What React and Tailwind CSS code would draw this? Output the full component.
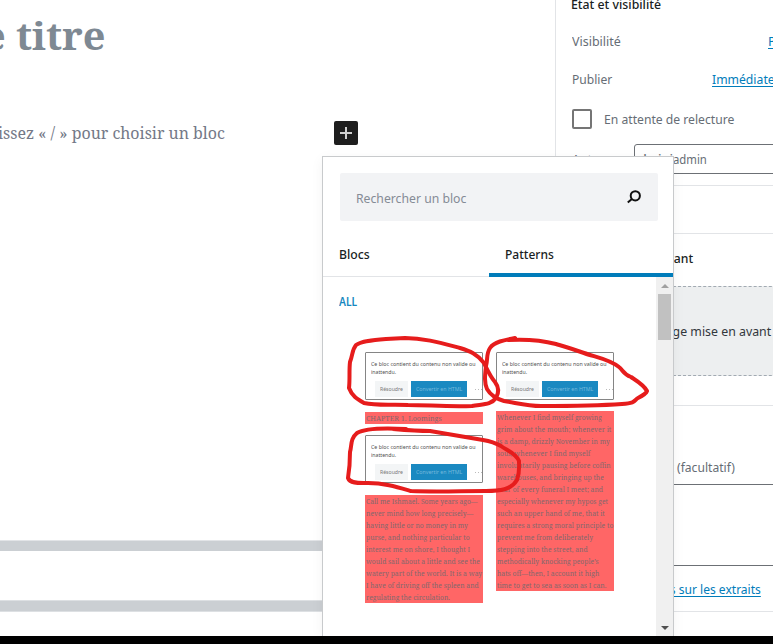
import { useLayoutEffect, useRef } from "react";

const SANS = "font-['Noto_Sans','Open_Sans',sans-serif]";
const SERIF = "font-['Noto_Serif','DejaVu_Serif',serif]";

// One line of text, condensed or widened to fill exactly `w` pixels.
function Fit({ w, className = "", children }) {
  const ref = useRef(null);
  useLayoutEffect(() => {
    const el = ref.current;
    const apply = () => {
      el.style.transform = `scaleX(${w / el.offsetWidth})`;
    };
    apply();
    document.fonts?.ready.then(apply);
  }, [w, children]);
  return (
    <span className="block shrink-0" style={{ width: w }}>
      <span ref={ref} className={`inline-block origin-left whitespace-nowrap align-top ${className}`}>
        {children}
      </span>
    </span>
  );
}

function InvalidBlock() {
  return (
    <div className="h-[48px] w-[118px] rounded-[1px] border border-[#858585] bg-white pl-[5px] pt-[7px]">
      <div className="text-[5.6px] leading-[8px] text-[#505050]">
        <Fit w={105}>Ce bloc contient du contenu non valide ou</Fit>
        <Fit w={25}>inattendu.</Fit>
      </div>
      <div className="mt-[5px] flex h-[16px] items-center pl-[4px] text-[5.6px] leading-[8px]">
        <div className="flex h-[16px] w-[33px] items-center justify-center bg-[#f3f5f6] text-[#777]">
          <Fit w={23}>Résoudre</Fit>
        </div>
        <div className="ml-[3px] flex h-[16px] w-[56px] items-center justify-center bg-[#1a89c1] text-[#76b9dc]">
          <Fit w={46}>Convertir en HTML</Fit>
        </div>
        <div className="ml-[8px] flex gap-[2px]">
          <i className="size-px bg-[#bbb]" />
          <i className="size-px bg-[#bbb]" />
          <i className="size-px bg-[#bbb]" />
        </div>
      </div>
    </div>
  );
}

function Excerpt({ lines, size = "text-[7.2px]" }) {
  return (
    <div className={`w-[118px] bg-[#ff6666] pl-[0.5px] text-[#85686d] ${SERIF} ${size}`}>
      {lines.map(([text, w]) => (
        <div key={text} className="h-[12px] leading-[12px]">
          <Fit w={w}>{text}</Fit>
        </div>
      ))}
    </div>
  );
}

const ISHMAEL = [
  ["Call me Ishmael. Some years ago—", 112],
  ["never mind how long precisely—", 107],
  ["having little or no money in my", 102],
  ["purse, and nothing particular to", 104],
  ["interest me on shore, I thought I", 104],
  ["would sail about a little and see the", 114],
  ["watery part of the world. It is a way", 116],
  ["I have of driving off the spleen and", 113],
  ["regulating the circulation.", 84],
];

const WHENEVER = [
  ["Whenever I find myself growing", 105],
  ["grim about the mouth; whenever it", 114],
  ["is a damp, drizzly November in my", 113],
  ["soul; whenever I find myself", 93],
  ["involuntarily pausing before coffin", 114],
  ["warehouses, and bringing up the", 107],
  ["rear of every funeral I meet; and", 106],
  ["especially whenever my hypos get", 111],
  ["such an upper hand of me, that it", 108],
  ["requires a strong moral principle to", 116],
  ["prevent me from deliberately", 96],
  ["stepping into the street, and", 91],
  ["methodically knocking people’s", 102],
  ["hats off—then, I account it high", 102],
  ["time to get to sea as soon as I can.", 109],
];

function Editor() {
  return (
    <main className={`flex w-[555px] shrink-0 flex-col ${SERIF}`}>
      <div className="mt-[10px] h-[50px] -ml-[17px] text-[38px] font-bold leading-[50px] text-[#7e8993]">
        <Fit w={122}>e titre</Fit>
      </div>
      <div className="mt-[61px] flex h-6 items-center justify-between pr-[197px]">
        <div className="-ml-[2px] text-[16px] leading-6 text-[#747987]">
          <Fit w={227}>issez « / » pour choisir un bloc</Fit>
        </div>
        <button className="flex size-6 items-center justify-center rounded-[2px] bg-[#1e1e1e]">
          <svg width="12" height="12" viewBox="0 0 12 12" fill="#d0d0d0">
            <path d="M5 0h2v5h5v2H7v5H5V7H0V5h5z" />
          </svg>
        </button>
      </div>
      <div className="mt-[395px] h-[11px] border-t border-[#e2e4e7] bg-[#cbcfd3]" />
      <div className="mt-[49px] h-[12px] border-y border-[#dde0e3] bg-[#cbcfd3]" />
    </main>
  );
}

function Sidebar() {
  return (
    <aside className="h-[636px] w-[218px] shrink-0 overflow-hidden border-l border-[#e2e4e7] text-[13px] leading-5 text-[#666d75]">
      <div className="-mt-[6px] h-5 pl-[15px] font-medium text-[#191e23]">
        <Fit w={90}>État et visibilité</Fit>
      </div>
      <div className="mt-[17px] flex h-5 pl-[16px]">
        <Fit w={49}>Visibilité</Fit>
        <a className="ml-[147px] text-[#007cba]"><Fit w={37} className="underline underline-offset-2">Public</Fit></a>
      </div>
      <div className="mt-[18px] flex h-5 pl-[16px]">
        <Fit w={40}>Publier</Fit>
        <a className="ml-[100px] text-[#007cba]"><Fit w={93} className="underline underline-offset-2">Immédiatement</Fit></a>
      </div>
      <div className="mt-[20px] flex h-5 items-center pl-[16px]">
        <span className="size-5 rounded-[2px] border-2 border-[#757575] bg-white" />
        <span className="ml-3"><Fit w={130}>En attente de relecture</Fit></span>
      </div>
      <div className="mt-[15px] flex h-[30px] items-center pl-[16px]">
        <Fit w={40}>Auteur</Fit>
        <div className="ml-[22px] flex h-[30px] w-[160px] shrink-0 items-center rounded-[3px] border border-[#6c7075] bg-white pl-[8px]">
          <Fit w={30}>krisi</Fit>
          <Fit w={34}>admin</Fit>
        </div>
      </div>
      <div className="mt-[11px] h-[49px] border-y border-[#e2e4e7]" />
      <div className="flex h-[48px] items-center pl-[15px] font-medium text-[#191e23]">
        <Fit w={122}>Image mise en avant</Fit>
      </div>
      <div className="mt-[4px] ml-[16px] flex h-[90px] w-[220px] items-center border border-dashed border-[#a2aab2] bg-[#edeff0] pl-[10px] text-[#32373c]">
        <Fit w={188}>Définir une image mise en avant</Fit>
      </div>
      <div className="mt-[29px] border-t border-[#e2e4e7] pt-[51px] pl-[16px]">
        <div className="h-5"><Fit w={163}>Rédiger un extrait (facultatif)</Fit></div>
        <div className="mt-[7px] h-[82px] w-[230px] border border-[#6c7075] bg-white" />
      </div>
      <div className="mt-[13px] h-5 pl-[16px] text-[#007cba]">
        <Fit w={189} className="underline underline-offset-2">En apprendre plus sur les extraits</Fit>
      </div>
      <div className="mt-[12px] border-t border-[#e2e4e7]" />
    </aside>
  );
}

function Inserter() {
  return (
    <section className="absolute left-[322px] top-[156px] flex h-[480px] w-[352px] flex-col border border-b-0 border-[#c8cacc] bg-white shadow-[0_3px_12px_rgba(25,30,35,0.05)]">
      <div className="ml-[17px] mt-[16px] flex h-12 w-[318px] items-center justify-between rounded-[2px] bg-[#f2f3f5] pl-4 pr-[16px] text-[13px] leading-5 text-[#858b95]">
        <span className="pt-px"><Fit w={110}>Rechercher un bloc</Fit></span>
        <svg width="16" height="16" viewBox="0 0 16 16" fill="none" stroke="#111" strokeWidth="2">
          <circle cx="9.3" cy="6.8" r="4.6" />
          <path d="M5.9 10.1 1.8 13.6" />
        </svg>
      </div>
      <div className="flex h-[56px] shrink-0 text-[13px] font-medium leading-5 text-[#191e23]">
        <div className="flex w-[166px] items-end border-b border-[#e2e4e7] pb-[12px] pl-[16px]"><Fit w={31}>Blocs</Fit></div>
        <div className="flex flex-1 items-end border-b-4 border-[#007cba] pb-[9px] pl-[16px]"><Fit w={49}>Patterns</Fit></div>
      </div>
      <div className="flex min-h-0 flex-1">
        <div className="flex-1">
          <div className="ml-[16px] mt-[15px] h-5 text-[12px] font-semibold leading-5 text-[#1688c0]"><Fit w={18}>ALL</Fit></div>
          <div className="ml-[42px] mt-[40px] flex gap-[13px]">
            <div className="flex flex-col">
              <InvalidBlock />
              <div className="h-[12px]" />
              <Excerpt size="text-[7.5px]" lines={[["CHAPTER 1. Loomings", 76]]} />
              <div className="h-[11px]" />
              <InvalidBlock />
              <div className="h-[12px]" />
              <Excerpt lines={ISHMAEL} />
            </div>
            <div className="flex flex-col gap-[11px]">
              <InvalidBlock />
              <Excerpt lines={WHENEVER} />
            </div>
          </div>
        </div>
        <div className="flex w-[17px] flex-col items-center bg-[#f0f0f0]">
          <svg className="mt-[7px]" width="8" height="4" viewBox="0 0 8 4" fill="#a0a0a0"><path d="M0 4 4 0l4 4z" /></svg>
          <div className="mt-[6px] h-[46px] w-[13px] bg-[#c1c1c1]" />
          <svg className="mb-[6px] mt-auto" width="8" height="4" viewBox="0 0 8 4" fill="#505050"><path d="M0 0h8L4 4z" /></svg>
        </div>
      </div>
    </section>
  );
}

// Freehand marker strokes circling the three broken previews.
function Marker() {
  return (
    <svg className="pointer-events-none absolute left-0 top-0" width="773" height="644" fill="none" stroke="#e61c1c" strokeWidth="4" strokeLinecap="round" strokeLinejoin="round">
      <path d="M386 339C373 340 361 341 356 345C352 350 353 354 350 362C349 370 350 379 349 388C352 396 357 399 364 403C378 406 392 404 408 405C428 405 448 407 472 406C483 404 491 405 496 398C500 391 498 386 495 382C490 376 487 369 484 363C477 354 470 351 460 348C441 343 424 338 405 338Z" />
      <path d="M515 338C504 340 494 342 490 348C486 354 488 359 486 366C485 375 484 382 487 389C491 396 497 399 504 401C517 403 527 406 541 406C569 406 594 406 622 404C637 403 634 400 638 398C642 396 646 394 647 391C644 385 637 381 631 377C623 374 623 370 619 367C609 359 595 357 584 353C573 349 566 347 556 344C541 340 526 339 508 340" />
      <path d="M406 429C388 428 365 428 357 433C350 439 352 445 350 452C350 462 349 472 348 478C350 484 360 483 368 483C384 483 397 487 411 491C436 492 461 491 486 491C500 491 511 490 517 480C520 472 519 466 519 461C516 453 506 450 501 446C494 442 489 441 483 440C466 437 447 434 430 431C418 431 405 430 393 429" />
    </svg>
  );
}

export default function App() {
  return (
    <div className={`relative flex h-[644px] w-[773px] flex-col overflow-hidden bg-white ${SANS}`}>
      <div className="flex h-[636px]">
        <Editor />
        <Sidebar />
      </div>
      <div className="h-[8px] bg-black" />
      <Inserter />
      <Marker />
    </div>
  );
}
